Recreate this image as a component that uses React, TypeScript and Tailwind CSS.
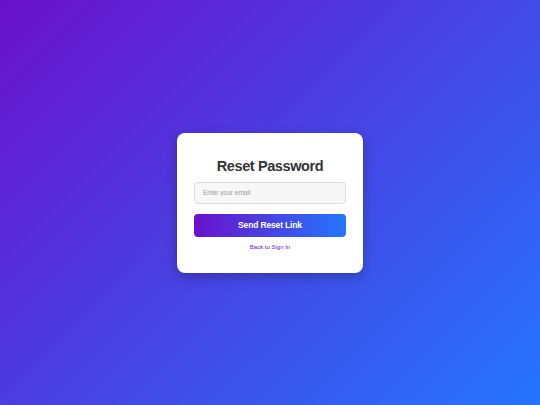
export default function App() {
  return (
    <div
      className="w-full h-[405px] flex items-center justify-center bg-[linear-gradient(135deg,#6a11cb_0%,#2575fc_100%)]"
      style={{ fontFamily: '"Liberation Sans", Arial, sans-serif' }}
    >
      <div className="w-[186px] bg-white rounded-[8px] shadow-[0_4px_12px_rgba(0,0,0,0.25)] px-[17px] pt-[23px] pb-[22px] flex flex-col items-center">
        <h2 className="text-[14.5px] leading-[20px] font-bold tracking-[-0.4px] text-[#333]">Reset Password</h2>
        <input
          type="email"
          placeholder="Enter your email"
          className="mt-[6px] w-full h-[22px] px-[8px] text-[6.5px] bg-[#f7f7f7] border border-[#ddd] rounded-[4px] placeholder:text-[#999] outline-none"
        />
        <button className="mt-[10px] w-full h-[23px] rounded-[4px] text-white text-[8.5px] font-bold tracking-[-0.15px] bg-[linear-gradient(90deg,#6a11cb_0%,#2575fc_100%)]">
          Send Reset Link
        </button>
        <a href="#" className="mt-[6px] text-[6px] leading-[8px] text-[#6a11cb]">Back to Sign In</a>
      </div>
    </div>
  );
}
